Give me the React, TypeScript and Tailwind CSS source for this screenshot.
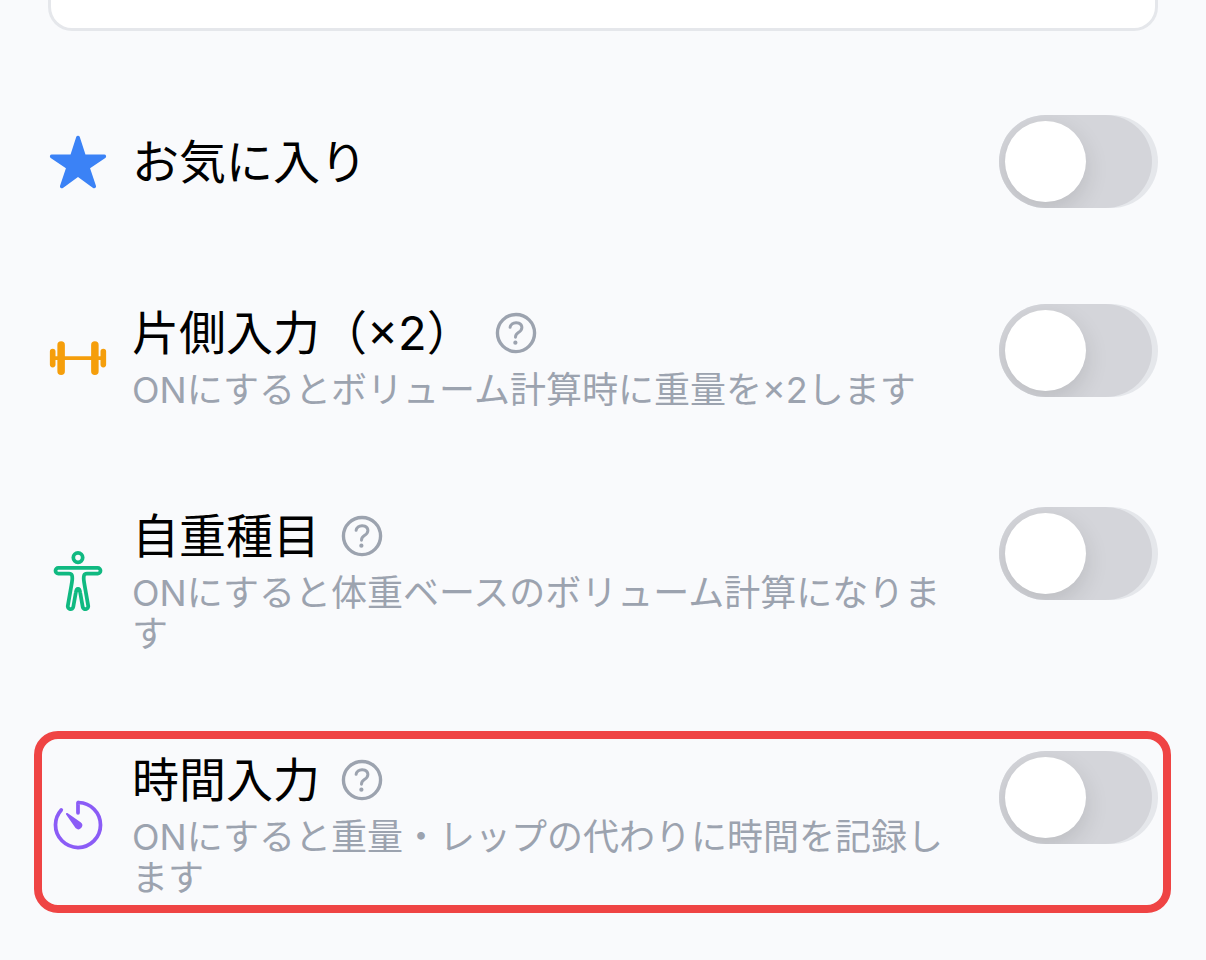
import { useState } from 'react';
import type { IconType } from 'react-icons';
import { IoBarbellOutline, IoBodyOutline, IoHelpCircleOutline, IoStar, IoTimerOutline } from 'react-icons/io5';

type Option = {
  id: string;
  title: string;
  description?: string;
  icon: IconType;
  color: string;
  highlighted?: boolean;
};

const options: Option[] = [
  { id: 'favorite', title: 'お気に入り', icon: IoStar, color: 'text-[#3b82f6]' },
  {
    id: 'one-side',
    title: '片側入力（×2）',
    description: 'ONにするとボリューム計算時に重量を×2します',
    icon: IoBarbellOutline,
    color: 'text-[#f59e0b]',
  },
  {
    id: 'bodyweight',
    title: '自重種目',
    description: 'ONにすると体重ベースのボリューム計算になります',
    icon: IoBodyOutline,
    color: 'text-[#10b981]',
  },
  {
    id: 'timed',
    title: '時間入力',
    description: 'ONにすると重量・レップの代わりに時間を記録します',
    icon: IoTimerOutline,
    color: 'text-[#8b5cf6]',
    highlighted: true,
  },
];

function Switch({ id }: { id: string }) {
  const [on, setOn] = useState(false);

  return (
    <label htmlFor={id} className="relative block w-[159px] h-[93px] shrink-0 rounded-full bg-[#e5e7eb] cursor-pointer">
      <input
        id={id}
        type="checkbox"
        role="switch"
        aria-labelledby={`${id}-title`}
        checked={on}
        onChange={(e) => setOn(e.target.checked)}
        className="peer sr-only"
      />
      <span className="flex w-[153px] h-full p-[6px] rounded-full overflow-hidden bg-[#d4d5da] transition-colors peer-checked:bg-[#3b82f6] peer-checked:justify-end">
        <span className="size-[81px] rounded-full bg-white shadow-[0_8px_24px_rgba(0,0,0,0.12)]" />
      </span>
    </label>
  );
}

function OptionRow({ option }: { option: Option }) {
  const Icon = option.icon;

  return (
    <li className="relative flex items-start gap-12">
      <div className="flex flex-1 min-w-0 min-h-[93px] items-center gap-6">
        <Icon className={`size-[60px] shrink-0 ${option.color}`} />
        <div className="flex-1 min-w-0">
          <div className="flex items-center gap-[15px]">
            <span id={`${option.id}-title`} className="text-[47px] leading-[58px] text-black">
              {option.title}
            </span>
            {option.description && (
              <button type="button" aria-label={`${option.title} ヘルプ`} className="text-[#9ca3af] cursor-pointer">
                <IoHelpCircleOutline className="size-[54px]" />
              </button>
            )}
          </div>
          {option.description && (
            <p className="mt-2 text-[36px] leading-[41px] text-[#9ca3af]">{option.description}</p>
          )}
        </div>
      </div>
      <Switch id={option.id} />
      {option.highlighted && (
        <div className="absolute -left-[14px] -right-[13px] -top-5 -bottom-[14px] rounded-[24px] border-8 border-[#ef4444] pointer-events-none" />
      )}
    </li>
  );
}

export default function App() {
  return (
    <main
      lang="ja"
      className="min-h-screen px-12 bg-[#f9fafc] font-['Inter','Noto_Sans_CJK_JP',sans-serif]"
    >
      <div className="h-[31px] rounded-b-3xl border-3 border-t-0 border-[#e5e7eb] bg-white" />
      <ul className="flex flex-col gap-24 pt-[84px] pb-12">
        {options.map((option) => (
          <OptionRow key={option.id} option={option} />
        ))}
      </ul>
    </main>
  );
}
